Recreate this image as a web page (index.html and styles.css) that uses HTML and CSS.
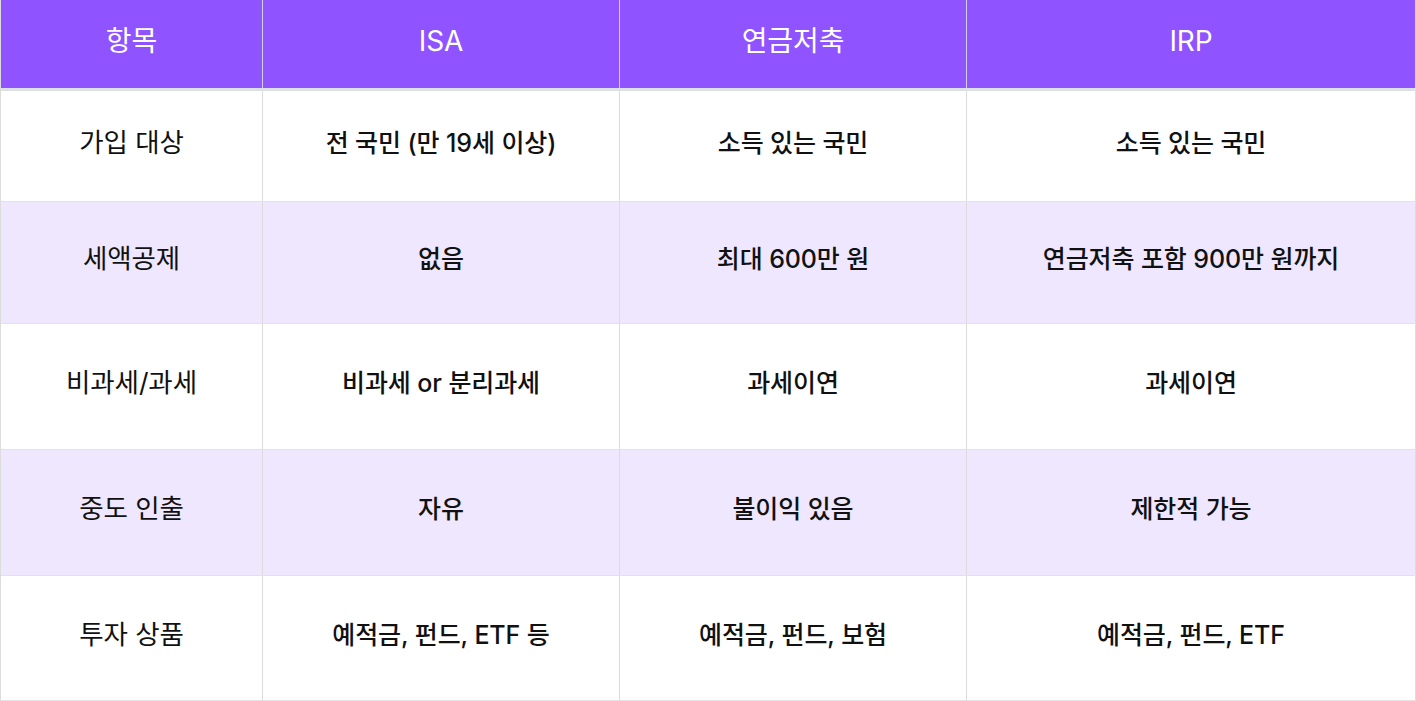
FILE: index.html
```html
<!DOCTYPE html>
<html lang="ko">
<head>
<meta charset="utf-8">
<link rel="stylesheet" href="styles.css">
</head>
<body>
<div class="table">
  <div class="row head">
    <div class="cell">항목</div>
    <div class="cell">ISA</div>
    <div class="cell">연금저축</div>
    <div class="cell">IRP</div>
  </div>
  <div class="row r1">
    <div class="cell label">가입 대상</div>
    <div class="cell">전 국민 (만 19세 이상)</div>
    <div class="cell">소득 있는 국민</div>
    <div class="cell">소득 있는 국민</div>
  </div>
  <div class="row r2 alt">
    <div class="cell label">세액공제</div>
    <div class="cell">없음</div>
    <div class="cell">최대 600만 원</div>
    <div class="cell">연금저축 포함 900만 원까지</div>
  </div>
  <div class="row r3">
    <div class="cell label">비과세/과세</div>
    <div class="cell">비과세 or 분리과세</div>
    <div class="cell">과세이연</div>
    <div class="cell">과세이연</div>
  </div>
  <div class="row r4 alt">
    <div class="cell label">중도 인출</div>
    <div class="cell">자유</div>
    <div class="cell">불이익 있음</div>
    <div class="cell">제한적 가능</div>
  </div>
  <div class="row r5">
    <div class="cell label">투자 상품</div>
    <div class="cell">예적금, 펀드, ETF 등</div>
    <div class="cell">예적금, 펀드, 보험</div>
    <div class="cell">예적금, 펀드, ETF</div>
  </div>
</div>
</body>
</html>
```

FILE: styles.css
```css
html, body {
  margin: 0;
  padding: 0;
  background: #ffffff;
}

body {
  font-family: Inter, "Noto Sans CJK KR", sans-serif;
  color: #111111;
}

.table {
  width: 1416px;
  border-left: 1px solid #dcdcdc;
  box-sizing: border-box;
}

.row {
  display: grid;
  grid-template-columns: 262px 357px 347px 449px;
  border-bottom: 1px solid #e2e2e2;
  box-sizing: border-box;
}

.cell {
  display: flex;
  align-items: center;
  justify-content: center;
  padding-bottom: 7px;
  border-right: 1px solid #dcdcdc;
  box-sizing: border-box;
  font-size: 25px;
  font-weight: 500;
  letter-spacing: -0.1px;
  line-height: 1.2;
}

.cell.label {
  font-size: 26.5px;
  font-weight: 400;
}

.head {
  height: 91px;
  background: #8f53ff;
  border-bottom: 3px solid #dde0e4;
}

.head .cell {
  color: #ffffff;
  font-size: 28px;
  font-weight: 400;
  padding-bottom: 4px;
  border-right-color: #d6cfe6;
}

.alt {
  background: #efe7fd;
}

.r1 { height: 111px; }
.r2 { height: 122px; }
.r3 { height: 126px; }
.r4 { height: 126px; }
.r5 { height: 125px; }
```
